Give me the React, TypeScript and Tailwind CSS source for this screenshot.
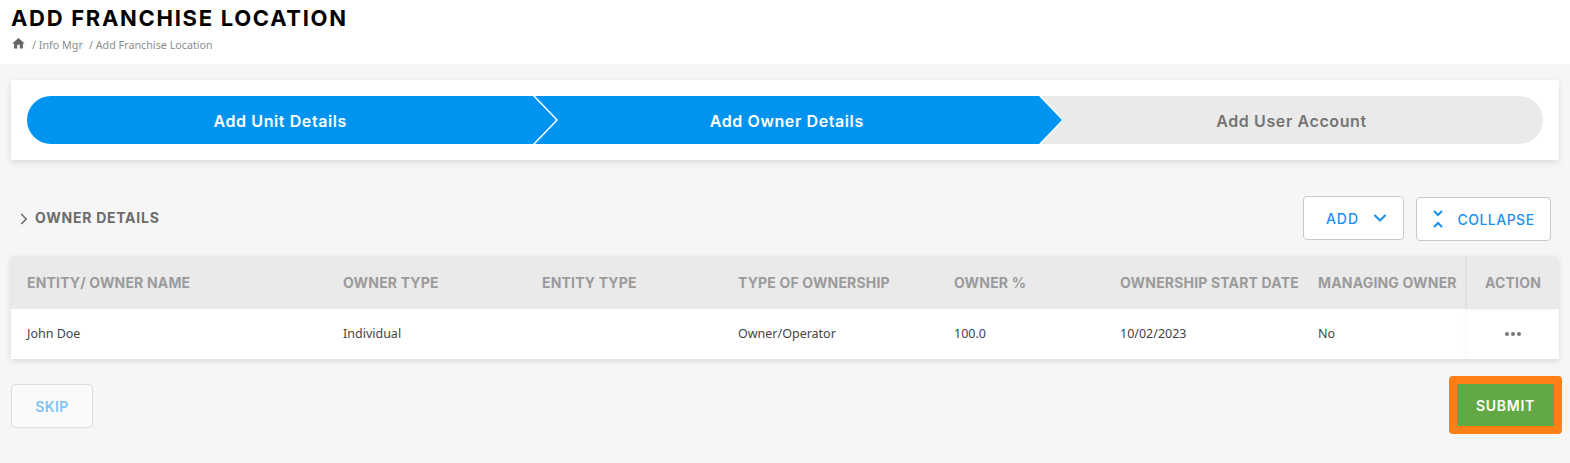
import { ChevronDown, ChevronRight } from 'lucide-react'

const heading = "font-['Inter','Liberation_Sans',sans-serif]"

const columns = [
  { label: 'ENTITY/ OWNER NAME', value: 'John Doe' },
  { label: 'OWNER TYPE', value: 'Individual' },
  { label: 'ENTITY TYPE', value: '' },
  { label: 'TYPE OF OWNERSHIP', value: 'Owner/Operator' },
  { label: 'OWNER %', value: '100.0' },
  { label: 'OWNERSHIP START DATE', value: '10/02/2023' },
  { label: 'MANAGING OWNER', value: 'No' },
]

const gridCols = 'grid grid-cols-[316px_199px_196px_216px_166px_198px_165px_1fr]'

function StepArrow() {
  return (
    <svg className="absolute left-full top-0 z-10 -ml-px" width="26" height="48" viewBox="0 0 26 48">
      <polygon points="0,-1 25,24 0,49" fill="#0094f0" />
      <polyline points="0,-1 24,24 0,49" fill="none" stroke="#fff" strokeWidth="1.5" />
    </svg>
  )
}

function Step({ label, active, className }: { label: string; active: boolean; className: string }) {
  return (
    <div
      className={`relative flex h-12 items-center justify-center pt-[2px] text-[16px] font-semibold tracking-[0.6px] ${heading} ${
        active ? 'bg-[#0094f0] text-white' : 'bg-[#eaeaea] text-[#757575]'
      } ${className}`}
    >
      {label}
      {active && <StepArrow />}
    </div>
  )
}

export default function App() {
  return (
    <div className="min-h-[463px] bg-[#f6f6f6] font-['Noto_Sans',sans-serif]">
      <header className="h-16 bg-white px-[11px] pt-[6px]">
        <h1 className={`text-[22px] leading-[24px] font-bold tracking-[1.7px] text-black ${heading}`}>
          ADD FRANCHISE LOCATION
        </h1>
        <div className="mt-[6px] flex h-[18px] items-center text-[10.75px] text-[#8c8c8c]">
          <svg width="15" height="15" viewBox="0 0 24 24" fill="#666" className="mr-[6px] -mt-[3px]">
            <path d="M10 20v-6h4v6h5v-8h3L12 3 2 12h3v8z" />
          </svg>
          <span>/ Info Mgr</span>
          <span className="ml-[6px]">/ Add Franchise Location</span>
        </div>
      </header>

      <section className="mx-[11px] mt-4 h-20 bg-white p-4 shadow-[0_2px_6px_rgba(0,0,0,0.12)]">
        <div className="flex">
          <Step label="Add Unit Details" active className="w-[506.5px] rounded-l-3xl" />
          <Step label="Add Owner Details" active className="w-[506.5px]" />
          <Step label="Add User Account" active={false} className="w-[503px] rounded-r-3xl" />
        </div>
      </section>

      <div className="mt-9 flex h-[60px] pl-[15px] pr-[19px]">
        <div className="flex h-11 items-center">
          <ChevronRight size={18} strokeWidth={2.25} className="mt-[2px] text-[#6f6f6f]" />
          <span className={`ml-[2px] -mt-[1px] text-[14px] font-bold tracking-[0.75px] text-[#6b6b6b] ${heading}`}>
            OWNER DETAILS
          </span>
        </div>
        <div className="ml-auto flex items-start">
          <button
            className={`flex h-11 w-[101px] items-center justify-center gap-[11px] rounded border border-[#c9c9c9] bg-white pl-[9px] text-[14px] font-medium tracking-[1px] text-[#1a8fef] ${heading}`}
          >
            ADD
            <ChevronDown size={20} strokeWidth={2.5} />
          </button>
          <button
            className={`mt-px ml-[12px] flex h-11 w-[135px] items-center justify-center gap-[13px] rounded border border-[#c9c9c9] bg-white text-[14px] font-medium tracking-[0.5px] text-[#1a8fef] ${heading}`}
          >
            <svg width="12" height="18" viewBox="0 0 12 18" fill="none" stroke="#1a8fef" strokeWidth="2">
              <path d="M2 1l4 4 4-4M2 17l4-4 4 4" />
            </svg>
            COLLAPSE
          </button>
        </div>
      </div>

      <section className="mx-[11px] w-[1548px] overflow-hidden rounded-t bg-white shadow-[0_2px_6px_rgba(0,0,0,0.12)]">
        <div className={`${gridCols} h-[53px] items-center bg-[#eaeaea]`}>
          {columns.map((c) => (
            <div
              key={c.label}
              className={`pl-4 text-[14px] font-bold tracking-[0.17px] whitespace-nowrap text-[#9b9b9b] ${heading}`}
            >
              {c.label}
            </div>
          ))}
          <div
            className={`flex h-full items-center justify-center text-[14px] font-bold tracking-[0.17px] text-[#9b9b9b] shadow-[-2px_0_3px_rgba(0,0,0,0.05)] ${heading}`}
          >
            ACTION
          </div>
        </div>
        <div className={`${gridCols} h-[50px] items-center`}>
          {columns.map((c) => (
            <div key={c.label} className="pl-4 text-[12.5px] text-[#444]">
              {c.value}
            </div>
          ))}
          <div className="flex h-full items-center justify-center gap-[2px] shadow-[-2px_0_3px_rgba(0,0,0,0.03)]">
            <span className="size-[4px] rounded-full bg-[#777]" />
            <span className="size-[4px] rounded-full bg-[#777]" />
            <span className="size-[4px] rounded-full bg-[#777]" />
          </div>
        </div>
      </section>

      <div className="mt-[17px] flex items-start pl-[11px] pr-2">
        <button
          className={`mt-2 h-11 w-[82px] rounded border border-[#dedede] bg-[#fafafa] text-[14px] font-semibold tracking-[0.4px] text-[#7cc4f7] ${heading}`}
        >
          SKIP
        </button>
        <button
          className={`ml-auto h-[58px] w-[113px] rounded border-8 border-[#ff7f17] bg-[#62a945] text-[14px] font-semibold tracking-[0.7px] text-white ${heading}`}
        >
          SUBMIT
        </button>
      </div>
    </div>
  )
}
